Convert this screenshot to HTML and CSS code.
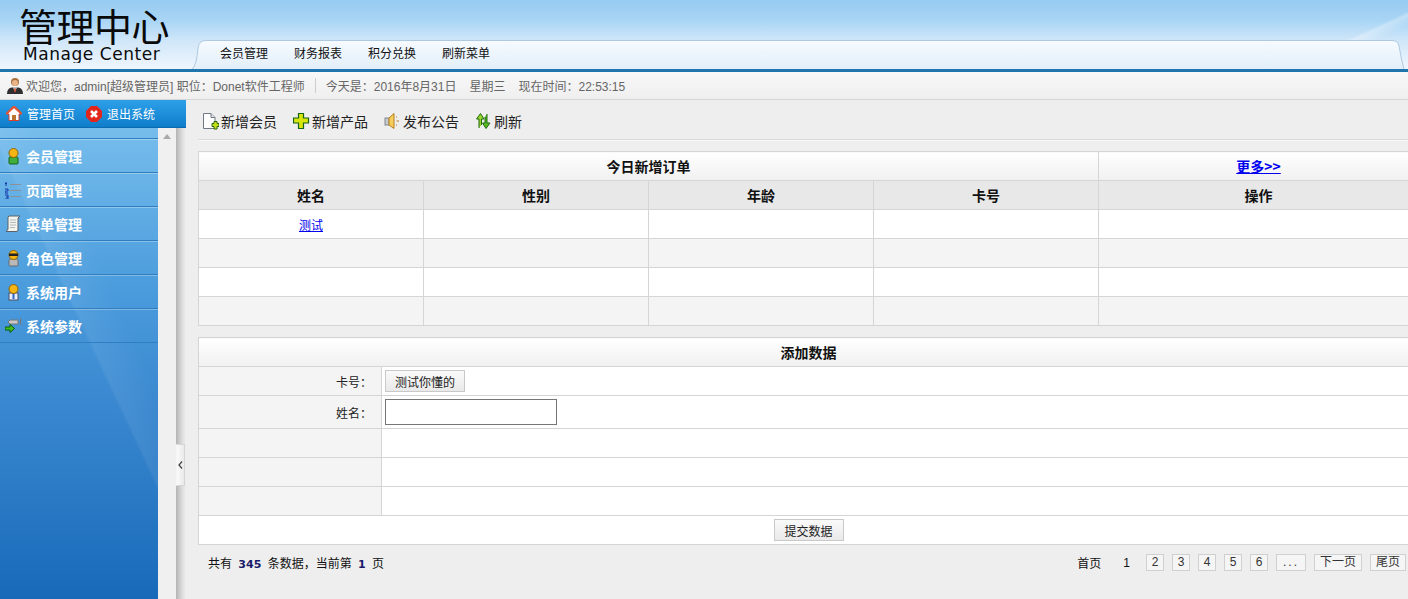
FILE: index.html
```html
<!DOCTYPE html>
<html lang="zh">
<head>
<meta charset="utf-8">
<title>管理中心</title>
<link rel="stylesheet" href="styles.css">
</head>
<body>
<header class="header">
  <div class="logo">
    <div class="logo-cn">管理中心</div>
    <div class="logo-en">Manage Center</div>
  </div>
  <nav class="nav">
    <svg class="nav-shape" width="1216" height="30" viewBox="0 0 1216 30"><defs><linearGradient id="navg" x1="0" y1="0" x2="0" y2="1"><stop offset="0" stop-color="#f6fbff"/><stop offset="1" stop-color="#e2eef9"/></linearGradient></defs><path d="M0 29.5 Q5 24 6 8 Q7 .5 14 .5 H1200 Q1206 .5 1207 6 Q1209 18 1212 29.5" fill="url(#navg)" stroke="#afc9e0"/></svg>
    <a class="nav-item">会员管理</a>
    <a class="nav-item">财务报表</a>
    <a class="nav-item">积分兑换</a>
    <a class="nav-item">刷新菜单</a>
  </nav>
</header>
<div class="status">
  <svg class="ico-user" width="18" height="18" viewBox="0 0 18 18"><circle cx="9" cy="5" r="4" fill="#a86f3a"/><circle cx="9" cy="6" r="3" fill="#e8b488"/><path d="M1 17 Q1 11 6 10.500 H12 Q17 11 17 17Z" fill="#2f2f2f"/><path d="M7 10.500 H11 L9 15Z" fill="#e9e9e9"/><path d="M8.500 11 H9.500 L10 14 L9 15.500 L8 14Z" fill="#c9442a"/></svg>
  <span class="s-text">欢迎您，admin[超级管理员] 职位：Donet软件工程师</span>
  <span class="s-div"></span>
  <span class="s-date">今天是：2016年8月31日</span>
  <span class="s-week">星期三</span>
  <span class="s-time">现在时间：22:53:15</span>
</div>
<div class="body">
  <aside class="side">
    <div class="quick">
      <a class="quick-item">
        <svg width="16" height="16" viewBox="0 0 16 16"><path d="M1 8 L8 1.500 L15 8 L13 8 V14.500 H3 V8Z" fill="#fff" stroke="#d8402a"/><path d="M0 8 L8 .5 L16 8" fill="none" stroke="#e4552f" stroke-width="2"/><rect x="6" y="9" width="4" height="5" fill="#b9772e"/></svg>
        管理首页</a>
      <a class="quick-item">
        <svg width="16" height="16" viewBox="0 0 16 16"><path d="M5 0 H11 L16 5 V11 L11 16 H5 L0 11 V5Z" fill="#e3261c"/><path d="M5 5 L11 11 M11 5 L5 11" stroke="#fff" stroke-width="2.600"/></svg>
        退出系统</a>
    </div>
    <div class="side-row">
      <div class="menu">
        <a class="menu-item">
          <svg width="16" height="18" viewBox="0 0 16 18"><rect x="4" y="10" width="9" height="7" rx="1" fill="#3fae3c" stroke="#14641a"/><circle cx="8.500" cy="6" r="4.500" fill="#f5b514" stroke="#8f6406"/></svg>
          会员管理</a>
        <a class="menu-item">
          <svg width="16" height="18" viewBox="0 0 16 18"><path d="M0 2.500 H2 M1 1 V5 M0 8 H3 V10 H0 V12 H3 M0 14 H3 V18 H0 M1 16 H3" stroke="#1238a8" fill="none"/><path d="M5 3.500 H16 M5 9.500 H16 M5 15.500 H16" stroke="#8b9198"/></svg>
          页面管理</a>
        <a class="menu-item">
          <svg width="16" height="18" viewBox="0 0 16 18"><path d="M4 1 H15 L13 3 V15 Q13 16.500 11 16.500 H1 Q3 15 3 14 V2Z" fill="#f4f4ee" stroke="#5a6068"/><path d="M5 5 H11 M5 7.500 H11 M5 10 H11 M5 12.500 H10" stroke="#b3b8bd"/></svg>
          菜单管理</a>
        <a class="menu-item">
          <svg width="16" height="18" viewBox="0 0 16 18"><rect x="4" y="10" width="9" height="7" rx="1" fill="#b9b9b9" stroke="#6b6b6b"/><circle cx="8.500" cy="6" r="4.500" fill="#f5b514" stroke="#8f6406"/><rect x="4" y="4.500" width="9" height="2.500" fill="#222"/></svg>
          角色管理</a>
        <a class="menu-item">
          <svg width="16" height="18" viewBox="0 0 16 18"><rect x="4" y="10" width="9" height="7" fill="#e8eefb" stroke="#48506a"/><path d="M8.500 10 V16" stroke="#2f63c8" stroke-width="2"/><circle cx="8.500" cy="6" r="4.500" fill="#f5b514" stroke="#8f6406"/></svg>
          系统用户</a>
        <a class="menu-item">
          <svg width="16" height="18" viewBox="0 0 16 18"><path d="M5 3 H13 V7 H5 L3 5Z" fill="#c9c9c9" stroke="#767676"/><path d="M15.500 1 V8" stroke="#777"/><path d="M0 10 H5 V7.500 L9.500 11.500 L5 15.500 V13 H0Z" fill="#3fbf22" stroke="#0d5a10"/></svg>
          系统参数</a>
      </div>
      <div class="scroll"><span class="scroll-up"></span></div>
      <div class="splitter">
        <div class="toggle"><svg width="5" height="8" viewBox="0 0 5 8"><path d="M4 0.500 L1 4 L4 7.500" fill="none" stroke="#444" stroke-width="1.300"/></svg></div>
      </div>
    </div>
  </aside>
  <main class="main">
    <div class="toolbar">
      <a class="tool">
        <svg width="17" height="18" viewBox="0 0 17 18"><path d="M1.500 1.500 H9 L13 5.500 V16.500 H1.500Z" fill="#fdfdfd" stroke="#707a84"/><path d="M9 1.500 V5.500 H13" fill="#dfe3e8" stroke="#707a84"/><path d="M10 11.500 H12 V9.500 H15 V11.500 H17 V14.500 H15 V17 H12 V14.500 H10Z" fill="#c6e018" stroke="#2c6a0d"/></svg>
        新增会员</a>
      <a class="tool">
        <svg width="17" height="18" viewBox="0 0 17 18"><path d="M5.500 1.500 H10.500 V6 H15.500 V11 H10.500 V16.500 H5.500 V11 H.5 V6 H5.500Z" fill="#d9e50f" stroke="#146414" stroke-width="1.200"/></svg>
        新增产品</a>
      <a class="tool">
        <svg width="17" height="18" viewBox="0 0 17 18"><rect x="1" y="6" width="4" height="7" fill="#c7cbcf" stroke="#808890"/><path d="M5 6 L10 1.500 V16.500 L5 13Z" fill="#f6cd5a" stroke="#b57f1c"/><path d="M12 5 H13 M12.500 9 H15 M12 13 H13" stroke="#b57f1c"/></svg>
        发布公告</a>
      <a class="tool">
        <svg width="17" height="18" viewBox="0 0 17 18"><path d="M4 16 V7 H1.500 L5.500 1.500 L9 7 H6.500 V13" fill="#9ad42a" stroke="#1f6a10"/><path d="M12 2 V11 H15 L11 16.500 L7.500 11 H10 V5" fill="#57b821" stroke="#1f6a10"/></svg>
        刷新</a>
    </div>
    <table class="grid">
      <colgroup><col class="c1"><col class="c1"><col class="c1"><col class="c1"><col></colgroup>
      <tr class="title"><td colspan="4">今日新增订单</td><td><a class="more" href="#">更多&gt;&gt;</a></td></tr>
      <tr class="head"><td>姓名</td><td>性别</td><td>年龄</td><td>卡号</td><td>操作</td></tr>
      <tr><td><a class="link" href="#">测试</a></td><td></td><td></td><td></td><td></td></tr>
      <tr class="alt"><td></td><td></td><td></td><td></td><td></td></tr>
      <tr><td></td><td></td><td></td><td></td><td></td></tr>
      <tr class="alt"><td></td><td></td><td></td><td></td><td></td></tr>
    </table>
    <table class="grid form">
      <colgroup><col class="lab"><col></colgroup>
      <tr class="title"><td colspan="2">添加数据</td></tr>
      <tr><td class="label">卡号：</td><td class="val"><button class="btn">测试你懂的</button></td></tr>
      <tr class="tall"><td class="label">姓名：</td><td class="val"><input class="input" type="text"></td></tr>
      <tr><td class="label"></td><td></td></tr>
      <tr><td class="label"></td><td></td></tr>
      <tr><td class="label"></td><td></td></tr>
      <tr><td colspan="2" class="submit"><button class="btn btn-submit">提交数据</button></td></tr>
    </table>
    <div class="pager">
      <div class="pager-info">共有 <b>345</b> 条数据，当前第 <b>1</b> 页</div>
      <div class="pager-links">
        <span class="pg-first">首页</span>
        <span class="pg-cur">1</span>
        <a class="pg">2</a><a class="pg">3</a><a class="pg">4</a><a class="pg">5</a><a class="pg">6</a>
        <a class="pg pg-more">...</a><a class="pg pg-next">下一页</a><a class="pg pg-last">尾页</a>
      </div>
    </div>
  </main>
</div>
</body>
</html>
```
FILE: styles.css
```css
* { box-sizing: border-box; }
html, body { margin: 0; padding: 0; height: 599px; overflow: hidden; }
body { font: 12px "Liberation Sans", "Noto Sans CJK SC", sans-serif; color: #222; background: #eee; display: flex; flex-direction: column; }

.header { height: 72px; flex: none; display: flex; overflow: hidden; border-bottom: 3px solid #1f76ad;
  background:
    linear-gradient(155deg, transparent 92%, rgba(255,255,255,.3) 92.5%, transparent 94%),
    linear-gradient(180deg, #97cbf1 0%, #a9d5f5 30%, #cfe6f9 58%, #f0f6fd 100%); }
.logo { width: 192px; flex: none; padding-left: 19px; overflow: hidden; color: #0a0a0a; }
.logo-cn { font: 38px/38px "Noto Sans CJK SC", sans-serif; margin-top: 6px; letter-spacing: -.5px; }
.logo-en { font: 17px/20px "DejaVu Sans", sans-serif; margin: 0 0 0 4px; letter-spacing: .55px; height: 19px; overflow: hidden; white-space: nowrap; }
.nav { flex: 1; margin-top: 40px; position: relative; display: flex; gap: 26px; padding-left: 28px; align-items: center; }
.nav-shape { position: absolute; left: 0; top: 0; }
.nav-item { position: relative; font-size: 12px; color: #111; line-height: 29px; }

.status { height: 28px; flex: none; display: flex; align-items: center; padding-left: 6px; color: #666; border-bottom: 1px solid #d5d5d5;
  background: linear-gradient(180deg, #f8f8f8, #efefef); white-space: nowrap; }
.ico-user { margin-right: 2px; }
.s-div { width: 1px; height: 15px; background: #ccc; margin: 0 10px; }
.s-week { margin-left: 13px; }
.s-time { margin-left: 13px; }

.body { flex: 1; display: flex; min-height: 0; }
.side { width: 186px; flex: none; display: flex; flex-direction: column; }
.quick { height: 28px; flex: none; display: flex; align-items: center; gap: 11px; padding-left: 6px; color: #fff;
  background: linear-gradient(180deg, #2e9fe9, #0e7ecb); border-bottom: 1px solid #0d6aae; }
.quick-item { display: flex; align-items: center; gap: 5px; }
.side-row { flex: 1; display: flex; min-height: 0; }
.menu { width: 158px; flex: none; padding-top: 10px; background:
    linear-gradient(65deg, transparent 55%, rgba(255,255,255,.07) 56%, transparent 68%),
    linear-gradient(180deg, #76bdec 0%, #4a9bdc 35%, #3a88d0 58%, #186ab9 100%); }
.menu-item { height: 34px; display: flex; align-items: center; gap: 5px; padding-left: 5px; color: #fff; font-size: 14px; font-weight: 700;
  border-top: 1px solid #2f7fc0; box-shadow: inset 0 1px 0 rgba(255,255,255,.3); }
.menu-item:last-child { border-bottom: 1px solid #2f7fc0; height: 35px; }
.scroll { width: 18px; flex: none; background: #f0f0f0; padding: 6px 0 0 5px; }
.scroll-up { display: block; width: 0; height: 0; border: 4px solid transparent; border-top: 0; border-bottom: 5px solid #a9a9a9; }
.splitter { width: 10px; flex: none; position: relative; background: linear-gradient(90deg, #b4b4b4, #dcdcdc 60%, #eee); }
.toggle { position: absolute; left: 0; top: 316px; width: 9px; height: 42px; background: linear-gradient(90deg, #fafafa, #e9e9e9); border: 1px solid #d5d5d5; border-left-color: #f5f5f5; display: flex; align-items: center; justify-content: center; }

.main { flex: 1; min-width: 0; overflow: hidden; padding-left: 12px; background: #eee; }
.toolbar { height: 40px; display: flex; align-items: center; gap: 16px; padding: 3px 0 0 4px; border-bottom: 1px solid #d8d8d8; box-shadow: 0 1px 0 #f8f8f8; font-size: 14px; color: #222; }
.tool { display: flex; align-items: center; gap: 2px; width: 75px; font-family: "Noto Sans CJK SC", sans-serif; white-space: nowrap; }

.grid { width: 1221px; table-layout: fixed; border-collapse: collapse; margin-top: 11px; background: #fff; }
.grid + .grid { margin-top: 11px; }
.c1 { width: 225px; }
.lab { width: 183px; }
.grid td { border: 1px solid #d5d5d5; height: 29px; padding: 0; text-align: center; }
.title td { background: linear-gradient(180deg, #fff, #f1f1f1); font: 700 14px "Noto Sans CJK SC", sans-serif; color: #111; }
.head td { background: #e8e8e8; font: 700 14px "Noto Sans CJK SC", sans-serif; color: #111; }
.alt td { background: #f4f4f4; }
.more { color: #00e; text-decoration: underline; }
.link { color: #00e; text-decoration: underline; font-size: 12px; }
.grid .label { background: #f4f4f4; text-align: right; padding-right: 9px; }
.grid .val { text-align: left; padding-left: 3px; }
.tall td { height: 33px; }
.btn { height: 22px; padding: 0 9px; font: 12px "Noto Sans CJK SC", sans-serif; color: #222; border: 1px solid #c9c9c9; border-radius: 0; background: linear-gradient(180deg, #fafafa, #e9e9e9); vertical-align: middle; }
.btn-submit { width: 70px; padding: 0; }
.input { width: 172px; height: 26px; border: 1px solid #767676; background: #fff; padding: 0 3px; vertical-align: middle; display: block; }

.pager { display: flex; justify-content: space-between; align-items: center; height: 35px; padding: 0 2px 0 10px; font-size: 12px; color: #111; }
.pager b { color: #1a1a6a; font-family: "DejaVu Sans", sans-serif; font-size: 11px; margin: 0 3px; }
.pager-links { display: flex; align-items: center; gap: 8px; }
.pg-first { margin-right: 14px; }
.pg-cur { margin-right: 8px; }
.pg { height: 17px; min-width: 18px; padding: 0 3px; line-height: 15px; text-align: center; border: 1px solid #d0d0d0; background: #f5f5f5; color: #333; }
.pg-more { width: 30px; letter-spacing: 2px; }
.pg-next { width: 48px; }
.pg-last { width: 36px; }
```
